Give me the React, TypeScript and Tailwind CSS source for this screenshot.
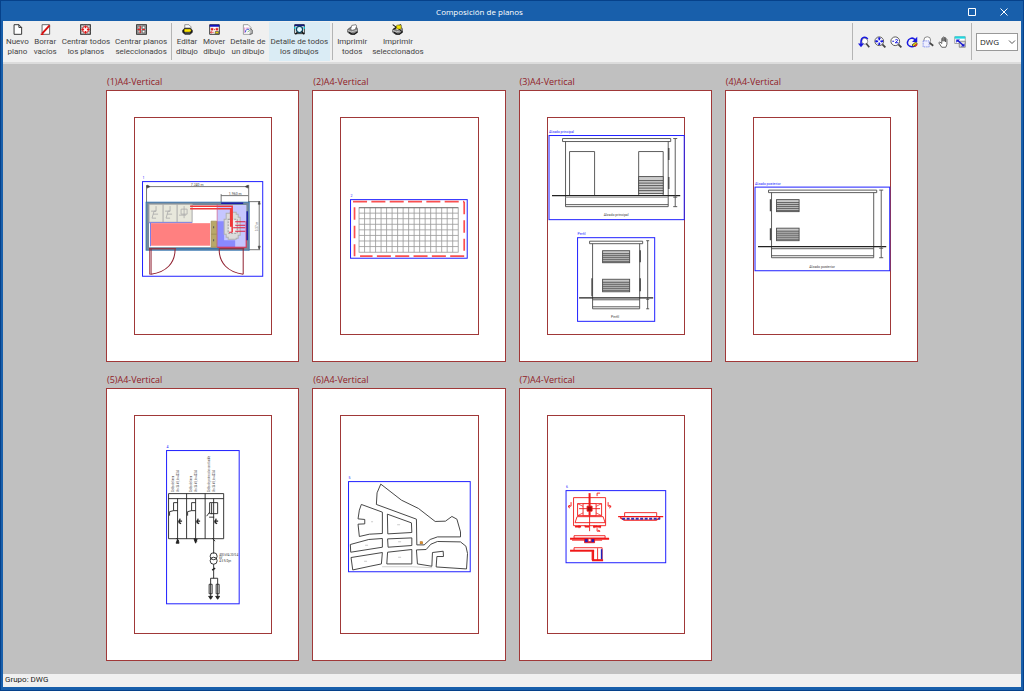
import { ReactNode, useState } from "react";
import clsx from "clsx";

type IconProps = { children: ReactNode; className?: string };

function Icon({ children, className }: IconProps) {
  return (
    <svg
      viewBox="0 0 16 16"
      className={clsx("shrink-0", className ?? "size-[11px]")}
      fill="none"
      stroke="#222"
      aria-hidden="true"
    >
      {children}
    </svg>
  );
}

const Magnifier = () => (
  <>
    <circle cx="7" cy="7" r="5.8" fill="#fff" stroke="#555" strokeWidth="1.3" />
    <path d="M11.2 11.2l4 4" stroke="#444" strokeWidth="2.4" />
  </>
);

const Printer = () => (
  <>
    <path d="M1 8l4-3h9l1.500 3v4l-5 3.500H6L1 12z" fill="#888" stroke="#333" />
    <path d="M1 9l5 2.500 9-2.500" stroke="#ddd" />
    <path d="M5 8l2-6 6-1 1 2-2 5-4 1z" fill="#fff" stroke="#555" />
    <path d="M3 12l4 2.500h4l4-3" stroke="#111" strokeWidth="1.500" />
  </>
);

const icons = {
  newPlan: (
    <Icon>
      <path d="M3 1h7l4 4v10H3z" fill="#fff" strokeWidth="1.300" />
      <path d="M10 1v4h4" strokeWidth="1.300" />
    </Icon>
  ),
  erase: (
    <Icon>
      <path d="M3 1h11v14H3z" fill="#fff" stroke="#555" strokeWidth="1.300" />
      <path d="M3 14L14 2" stroke="#d81010" strokeWidth="2.800" />
      <path d="M1 15h4" stroke="#d81010" strokeWidth="2" />
    </Icon>
  ),
  centerAll: (
    <Icon>
      <path d="M1 1h14v14H1z" fill="#ddd" strokeWidth="1.500" />
      <path d="M5 1v14M11 1v14M1 5h14M1 11h14" stroke="#888" />
      <circle cx="8" cy="8" r="4.500" fill="#fff" stroke="#e01818" strokeWidth="1.300" />
      <path d="M8 2v4M8 10v4M2 8h4M10 8h4" stroke="#e01818" strokeWidth="2" />
    </Icon>
  ),
  centerSelected: (
    <Icon>
      <path d="M1 1h14v14H1z" fill="#ccc" strokeWidth="1.500" />
      <path d="M3 3h4v4H3zM9 3h4v4H9zM3 9h4v4H3zM9 9h4v4H9z" fill="#fff" stroke="#444" />
      <path d="M2 8h5M9 8h4M6 3v4M6 9v4" stroke="#d82020" strokeWidth="1.800" />
    </Icon>
  ),
  edit: (
    <Icon>
      <path d="M4 1h6l3 3v6H4z" fill="#fff" stroke="#666" />
      <path d="M1 9l3-3h8l3 3v3l-3 3H4l-3-3z" fill="#151515" />
      <path d="M4 8h8l1 2-2 1H4z" fill="#ffe800" stroke="#ffe800" />
      <path d="M4 13h8" stroke="#999" />
    </Icon>
  ),
  move: (
    <Icon>
      <path d="M1 1h14v14H1z" fill="#fff" strokeWidth="1.300" />
      <path d="M1 2.500h14" stroke="#1010c0" strokeWidth="3" />
      <path d="M3 6h3v3H3zM10 6h3v3h-3z" fill="#e02020" stroke="#e02020" strokeWidth=".5" />
      <path d="M2 12h5M4 10.500L2 12l2 1.500M8 7v2" stroke="#d81010" />
      <path d="M9 11h5v3H9z" fill="#f0d800" stroke="#444" />
    </Icon>
  ),
  detail: (
    <Icon>
      <path d="M2 1h7l4 4v10H2z" fill="#fff" stroke="#777" />
      <path d="M4 5v8M6 6h4" stroke="#d050b0" />
      <path d="M5 12c0-4 3-5 5-4" stroke="#2040d0" strokeWidth="1.300" />
      <path d="M11 6l4 3v5l-4 1" fill="#bbb" stroke="#444" />
      <path d="M8 12l3-3" stroke="#309030" />
    </Icon>
  ),
  detailAll: (
    <Icon>
      <path d="M1 1h14v13H1z" fill="#fff" strokeWidth="1.300" />
      <path d="M1 2h14" stroke="#101880" strokeWidth="2.500" />
      <path d="M1 4v3M15 4v3" stroke="#00c8d8" strokeWidth="2" />
      <circle cx="8" cy="8" r="4.500" fill="#dff6ff" stroke="#0a4860" strokeWidth="1.800" />
      <path d="M11 11l4 4M5 12l-3 3" stroke="#111" strokeWidth="2" />
    </Icon>
  ),
  print: (
    <Icon>
      <Printer />
    </Icon>
  ),
  printSelected: (
    <Icon>
      <Printer />
      <path d="M1 1l14 10M2 8L13 1" stroke="#111" strokeWidth="1.500" />
      <path d="M7 2h6v5H7z" fill="#f4e400" stroke="#b8a800" />
    </Icon>
  ),
};

type Tool = { id: string; icon: ReactNode; lines: [string, string] };

const toolGroups: Tool[][] = [
  [
    { id: "new", icon: icons.newPlan, lines: ["Nuevo", "plano"] },
    { id: "erase", icon: icons.erase, lines: ["Borrar", "vacíos"] },
    { id: "centerAll", icon: icons.centerAll, lines: ["Centrar todos", "los planos"] },
    { id: "centerSel", icon: icons.centerSelected, lines: ["Centrar planos", "seleccionados"] },
  ],
  [
    { id: "edit", icon: icons.edit, lines: ["Editar", "dibujo"] },
    { id: "move", icon: icons.move, lines: ["Mover", "dibujo"] },
    { id: "detail", icon: icons.detail, lines: ["Detalle de", "un dibujo"] },
    { id: "detailAll", icon: icons.detailAll, lines: ["Detalle de todos", "los dibujos"] },
  ],
  [
    { id: "print", icon: icons.print, lines: ["Imprimir", "todos"] },
    { id: "printSel", icon: icons.printSelected, lines: ["Imprimir", "seleccionados"] },
  ],
];

const viewTools = [
  {
    label: "Vista anterior",
    icon: (
      <>
        <circle cx="9" cy="7" r="4" fill="#fff" stroke="#777" />
        <path d="M11 10l4 5" stroke="#444" strokeWidth="2.200" />
        <path d="M13 4C10 0 4 1 4 8v4" stroke="#1818e0" strokeWidth="2" />
        <path d="M0 10h8l-4 5z" fill="#1818e0" stroke="none" />
      </>
    ),
  },
  {
    label: "Ver todo",
    icon: (
      <>
        <Magnifier />
        <path d="M7 2v3.500M7 8.500V12M2 7h3.500M8.500 7H12" stroke="#1818e0" strokeWidth="2" />
        <path d="M5 4l2-2 2 2M5 10l2 2 2-2M4 5L2 7l2 2M10 5l2 2-2 2" stroke="#1818e0" />
      </>
    ),
  },
  {
    label: "Zoom doble",
    icon: (
      <>
        <Magnifier />
        <path d="M3 7h2.500M7 5.500c1-1.500 4-1 3 .8L7 9h4" stroke="#1818e0" strokeWidth="1.300" />
      </>
    ),
  },
  {
    label: "Redibujar",
    icon: (
      <>
        <path d="M12 13C7 16 1 13 2 8s7-7 10-3" stroke="#1818e0" strokeWidth="2" />
        <path d="M15 1v7H8z" fill="#1818e0" stroke="none" />
        <path d="M8 12l5-4 2 2-5 4z" fill="#f0d000" stroke="#333" />
        <path d="M12 14l3-3" stroke="#d02020" strokeWidth="2" />
      </>
    ),
  },
  {
    label: "Zoom ventana",
    icon: (
      <>
        <circle cx="7" cy="5.500" r="4.500" fill="#fff" stroke="#666" />
        <path d="M10 9l5 4" stroke="#444" strokeWidth="2.200" />
        <path d="M1.500 6.500h8v8h-8z" fill="#eef" stroke="#6878e8" strokeDasharray="2 1" />
      </>
    ),
  },
  {
    label: "Desplazar",
    icon: (
      <path
        d="M5 15L1 9l1.500-1L5 10V3.500c0-1 1.500-1 1.500 0V7 2c0-1 1.800-1 1.800 0v5-4.500c0-1 1.800-1 1.800 0V8 4.500c0-1 1.800-1 1.800 0V11l-1.500 4z"
        fill="#fff"
        stroke="#555"
        strokeWidth="1.200"
      />
    ),
  },
  {
    label: "Pantalla completa",
    icon: (
      <>
        <path d="M1 1h14v9H1z" fill="#fff" stroke="#888" />
        <path d="M1 2h14" stroke="#20d8e0" strokeWidth="3" />
        <path d="M7 7h8v8H7z" fill="#ddd" stroke="#777" />
        <path d="M5 6l8 7" stroke="#1818d0" strokeWidth="2" />
        <path d="M3 4.500h5L3 9zM14 14H9l5-4z" fill="#1818d0" stroke="none" />
      </>
    ),
  },
];

type FrameProps = { x: number; y: number; w: number; h: number; label: string };

// Selection frame of a drawing with its name over the top left corner
const Frame = ({ x, y, w, h, label }: FrameProps) => (
  <>
    <rect x={x} y={y} width={w} height={h} stroke="#2020ff" />
    <text x={x} y={y - 2.500} fontSize="3.5" fill="#2020ff" stroke="none">
      {label}
    </text>
  </>
);

type LouverProps = { x: number; y: number; w: number; h: number };

const Louver = ({ x, y, w, h }: LouverProps) => (
  <>
    <rect x={x} y={y} width={w} height={h} fill="#c8c8c8" />
    {[3, 5, 7, 9, 11].map((d) => (
      <path key={d} d={`M${x} ${y + d}h${w}`} strokeWidth=".9" />
    ))}
  </>
);

const Caption = ({ x, y, text }: { x: number; y: number; text: string }) => (
  <text x={x} y={y} fontSize="3.5" textAnchor="middle" fill="#444" stroke="none">
    {text}
  </text>
);

const FloorPlan = () => (
  <>
    <Frame x={142.5} y={181.5} w={120} h={94.5} label="1" />
    <g stroke="#555" strokeWidth=".8">
      <path d="M146.500 185v18M248.500 185v18M221 194v9M146 186.500h102M221 195.500h27M248 201.500h12M248 249.500h12M259 201v48" />
      <path d="M147 185l3 1.500-3 1.500zM248 185l-3 1.500 3 1.500zM258 204l1-3 1 3zM258 246l1 3 1-3z" fill="#333" />
    </g>
    <Caption x={197} y={186} text="7.240 m" />
    <Caption x={235} y={195} text="1.960 m" />
    <rect x="147.5" y="203.5" width="100" height="45" fill="#fff" stroke="#73889a" strokeWidth="3" />
    <rect x="146" y="202" width="103" height="48" stroke="#2a70b0" strokeWidth=".8" />
    <path d="M176 248.500h43" stroke="#2a70b0" />
    <rect x="217" y="205" width="29" height="42" fill="#c6c6ff" stroke="none" />
    <path d="M217 221h7v19h11v7h-18z" fill="#8a8aff" stroke="none" />
    <g fill="#e8e8dc" stroke="#aaa">
      <path d="M149 204h14v18h-14zM163 204h14v18h-14zM177 204h15v18h-15z" />
      <path
        d="M156 206v5h-5M156 211h-2l-2 7h4M153 214h5M170 206v5h-5M170 211h-2l-2 7h4M167 214h5M184 206v12M181 209h6v5h-6zM179 215h7"
        strokeWidth=".8"
      />
    </g>
    <path d="M149 222.500h43M150.500 222v24" stroke="#7878e8" />
    <rect x="151" y="223" width="59" height="22.5" fill="#ff8080" stroke="none" />
    <path d="M211 221h5.500v26H211zM211 234h5.500" fill="#b8a868" stroke="#9a8a50" strokeWidth=".7" />
    <path d="M213.500 226v2M213.500 239v2" stroke="#555" />
    <path
      d="M226 213h4v-1h6v2h2v3h2v18h-2v3h-2v1h-8v-2h-2v-3h-2v-15h2z"
      fill="#dcdcdc"
      stroke="#b0b0b0"
    />
    <path d="M228 219h9v14h-9z" fill="#eee" stroke="#999" strokeDasharray="2 1" />
    <path d="M190 206h42v26M190 208.500h40.500v18" stroke="#f03838" strokeWidth="1.500" />
    <path d="M235 221.500h10M235 225h10M233 227.500h12M235 231h10M229 232h3M217 247h29v-26" stroke="#e02040" />
    <path d="M217 204v43" stroke="#d04870" strokeWidth=".6" />
    <path d="M221 203h22M247 211v29" stroke="#1c1ca8" strokeWidth="1.500" />
    <g stroke="#902030">
      <path d="M149 248.500h27M151 249v25M219 248.500h25M243 249v25" />
      <path d="M149.500 248v26h1.500" strokeWidth=".7" />
      <path d="M175 249c0 14-9 23-24 25M219 249c0 14 9 23 24 25" />
    </g>
    <text transform="translate(258 231) rotate(-90)" fontSize="3" fill="#555" stroke="none">
      3.37 m
    </text>
  </>
);

const GroundGrid = () => (
  <>
    <Frame x={350.5} y={199.5} w={116.5} h={58.5} label="2" />
    <g stroke="#fa5050" strokeWidth="1.7">
      <path d="M353 201.500h111" strokeDasharray="14 4.300" />
      <path d="M464 256h-104" strokeDasharray="14 4.300" />
      <path d="M354.500 207v49M464 201.500v49" strokeDasharray="12.500 6" />
    </g>
    <g stroke="#989898" strokeWidth=".8">
      <rect x="359" y="207.5" width="99" height="44.500" />
      {Array.from({ length: 17 }, (_, i) => (
        <path key={i} d={`M${364.5 + i * 5.5} 207v45`} />
      ))}
      {Array.from({ length: 7 }, (_, i) => (
        <path key={i} d={`M359 ${213 + i * 5.56}h99`} />
      ))}
    </g>
    <path d="M359 207.500h99" stroke="#777" />
  </>
);

const FrontAndSide = () => (
  <>
    <Frame x={548} y={135.5} w={135} h={84} label="Alzado principal" />
    <g stroke="#4c4c4c" strokeWidth=".9">
      <path d="M561.500 138.500h108v3h-108zM564.500 141.500v65h102.500v-65M564.500 204.500h102.500" />
      <path d="M568.500 195v-43.500h25v43.500M637.500 195v-43.500h24.500v43.500" />
      <rect x="637.5" y="176.5" width="24.500" height="17" fill="#ccc" />
      <path d="M637.500 180.500h24.500M637.500 183h24.500M637.500 185.500h24.500M637.500 188h24.500M637.500 190.500h24.500" />
      <path d="M667.500 148v12M667.500 177v12" strokeWidth="1.500" />
      <path d="M564.500 197.200h102.500" stroke="#999" />
      <path d="M551 195.500h128" stroke="#222" strokeWidth="1.300" />
      <path d="M674 138.500v68M672 138.500h4M672 197h4M672 206.500h4" />
    </g>
    <Caption x={615} y={216} text="Alzado principal" />
    <Frame x={576.5} y={237.5} w={77} h={83.5} label="Perfil" />
    <g stroke="#4c4c4c" strokeWidth=".9">
      <path d="M588.500 241h53v2.500h-53zM591.500 243.500v65h47v-65M591.500 306.500h47M591.500 299.500h47" />
      <Louver x={601.5} y={250.5} w={27} h={12} />
      <Louver x={601.5} y={279} w={27} h={12.5} />
      <path d="M591 278v18M639 250v12M639 278v13" strokeWidth="1.500" />
      <path d="M578 297.500h74" stroke="#222" strokeWidth="1.300" />
      <path d="M646.500 240.500v68M645 240.500h3M645 299h3M645 308.500h3" />
    </g>
    <Caption x={614} y={318} text="Perfil" />
  </>
);

const RearElevation = () => (
  <>
    <Frame x={754} y={187} w={134.5} h={83.5} label="Alzado posterior" />
    <g stroke="#4c4c4c" strokeWidth=".9">
      <path d="M767.500 190h108v2.500h-108zM770.500 192.500v65h102v-65M770.500 255.500h102M770.500 248.500h102" />
      <Louver x={775.5} y={199.5} w={22.5} h={12} />
      <Louver x={775.5} y={228} w={22.5} h={12.5} />
      <path d="M769.500 199v12M769.500 228v12" strokeWidth="1.500" />
      <path d="M757 246.500h128" stroke="#222" strokeWidth="1.300" />
      <path d="M880 190v67.500M878 190h4M878 248h4M878 257.500h4" />
    </g>
    <Caption x={821} y={268} text="Alzado posterior" />
  </>
);

const cellNotes = [
  { x: 174, y: 492, text: "Celda de línea" },
  { x: 179, y: 492, text: "Vn=24 kV, In=400 A" },
  { x: 192, y: 492, text: "Celda de línea" },
  { x: 197, y: 492, text: "Vn=24 kV, In=400 A" },
  { x: 210, y: 492, text: "Celda de protección con fusible" },
  { x: 215, y: 492, text: "Vn=24 kV, In=400 A" },
];

const SingleLine = () => (
  <>
    <Frame x={166.5} y={450.5} w={72.5} h={153} label="4" />
    {cellNotes.map((note) => (
      <text
        key={note.x}
        transform={`translate(${note.x} ${note.y}) rotate(-90)`}
        fontSize="2.6"
        fill="#333"
        stroke="none"
      >
        {note.text}
      </text>
    ))}
    <g stroke="#222" strokeWidth=".9">
      <path d="M168.500 493.500h55v45h-55zM168.500 498.500h55M186.500 493.500v45M205 493.500v45" />
      <path d="M177.500 498.500v44M195.500 498.500v44M213.500 498.500v55" />
      <path d="M177.500 502.500h-4v8h4M195.500 502.500h-4v8h4M217.500 502.500h-8v11h8z" />
      <path d="M173.500 510.500l-4 1v4M191.500 510.500l-4 1v4M209.500 512l-3 4M211.500 503v11M209 517h5" />
      <path d="M178 521h4M180 518.500l-1 4 2 1M196 521h4M198 518.500l-1 4 2 1M214 521h4M216 518.500l-1 4 2 1" strokeWidth="1.300" />
      <path d="M176 538l3 3M194 538l3 3M212 538l3 3M176 543l1.500-4 1.500 4zM194 539l1.500 4 1.500-4z" fill="#222" />
      <circle cx="213.500" cy="556" r="3.500" />
      <circle cx="213.500" cy="560.500" r="3.500" />
      <path d="M213.500 564v14M210.500 584v-6h7v6M209 584h3v9.500h-3zM216 584h3v9.500h-3zM210.500 584v14M217.500 584v14" />
      <path d="M212 570l3-2" strokeWidth="1.500" />
      <path d="M208.500 596h4l-2 3zM215.500 596h4l-2 3z" fill="#222" />
    </g>
    <text fontSize="2.8" fill="#333" stroke="none">
      <tspan x="219" y="556">400 kVA 20/0.4</tspan>
      <tspan x="219" y="559">kV</tspan>
      <tspan x="219" y="562">4.5 % Dyn</tspan>
    </text>
  </>
);

const blocks = [
  "380.700,484 401.300,500 418.300,508.300 435,521.300 445.300,521 451.700,516.300 456.700,519 460.300,531.700 460.300,536.700 437.300,536.700 430,539.300 424,544.700 416.700,544.700 416.300,519 376.300,504.300 377,492.700",
  "361.300,504.300 382.300,512 382.300,533.300 369.300,534 359.300,536.300 358,524 364.700,523.700 364.700,519.300 358,518.700 359.300,510",
  "387.300,514 411.300,522.700 411.700,532.300 387.700,533.700",
  "387.500,538.700 411.700,537.700 411.700,545.300 388,547",
  "387.500,552 411.700,549.300 411.700,563.700 386.700,563.700",
  "350.300,544.300 368.700,539.300 382.300,538.300 382.300,547 350.700,552",
  "351,557.300 382.300,552.300 381.300,563.700 370,566 352.700,569.700",
  "437.300,541.300 460.300,541.700 465.700,546 467.300,553.300 466.300,568.700 436,566.700 436.700,556.300 443.300,556.300 443,551 432.300,552.300 431.700,566 417.300,563.700 416.300,549.700 426,549.300 430.700,544",
];

const SitePlan = () => (
  <>
    <Frame x={348.5} y={481.5} w={121.5} h={90} label="5" />
    <g stroke="#333" strokeWidth=".9">
      {blocks.map((points) => (
        <polygon key={points} points={points} />
      ))}
    </g>
    <path d="M382 566.500h30l20 1" stroke="#bbb" strokeWidth=".7" />
    <path d="M371 521.500h2M397 524.500h3M398 541.500h3M365 545h3M398 557h3M364 561h3" stroke="#ccc" />
    <rect x="420" y="541.5" width="2.500" height="2" fill="#e89020" stroke="#b07020" strokeWidth=".6" />
  </>
);

const Earthing = () => (
  <>
    <Frame x={565} y={490.5} w={99.5} h={72} label="6" />
    <g stroke="#f01818" strokeWidth=".9">
      <path d="M572.500 497.500h32v28h-32zM576.500 503.500h24v12h-24zM576 516.500h26l2 6h-30z" />
      <path d="M576.500 503.500l24 12M600.500 503.500l-24 12" strokeWidth=".7" />
      <path d="M582 503.500h13v12h-13z" fill="#fff" />
      <path d="M578 508.500h21" />
      <path d="M588.500 493v22" strokeWidth="2" />
      <path d="M588.500 515v16" />
      <path d="M586 506h5v5h-5z" fill="#a01010" />
      <path d="M570 502v4h-3M569 505l-2 1.500 2 1.500M607 502v4h3M608 505l2 1.500-2 1.500M596 496v-3h3M597 530l2 1h-3v-3M578 525v3M584 525v2M593 525v3M595 525v2M599 525v3" />
      <path d="M574 526.500h6M584 526.500h4M592 526.500h8" strokeWidth="1.500" />
      <path d="M573 535.500h31v2.500h-31z" />
      <path d="M569 538.500h39" strokeWidth="2" />
      <path d="M571 540h30" />
      <path d="M583.500 538.500h10v4h-10z" fill="#2020b8" />
      <path d="M587 538.500h3v3h-3z" fill="#fff" />
      <path d="M573 547.500h28v12.500h-10v-9M573 547.500v3" />
      <path d="M569 550.500h24" strokeWidth="2" />
      <path d="M592 550v10h10" strokeWidth="2" />
      <path d="M600.500 549v10" stroke="#2020b8" strokeWidth="1.500" />
      <path d="M596.500 548v12" />
      <path d="M623.500 516v-3.500h32v3.500" strokeWidth=".9" />
      <path d="M617 516.500h45M619 517.500l4 2.500h32l4-2.500" strokeWidth="1.300" />
      <path d="M621 518.500h38" stroke="#3030b0" strokeWidth="2" strokeDasharray="3 1.500" />
    </g>
  </>
);

const sheets = [
  { id: 1, viewBox: "135 118 136 216", drawing: <FloorPlan /> },
  { id: 2, viewBox: "341 118 136 216", drawing: <GroundGrid /> },
  { id: 3, viewBox: "547 118 136 216", drawing: <FrontAndSide /> },
  { id: 4, viewBox: "753 118 136 216", drawing: <RearElevation /> },
  { id: 5, viewBox: "135 416 136 216", drawing: <SingleLine /> },
  { id: 6, viewBox: "341 416 136 216", drawing: <SitePlan /> },
  { id: 7, viewBox: "547 416 136 216", drawing: <Earthing /> },
];

const Separator = () => <div className="my-px w-px self-stretch bg-[#b4b4b4]" />;

export default function App() {
  const [mode, setMode] = useState("detailAll");

  return (
    <div className="flex min-h-screen flex-col border border-[#06418a] bg-[#185fab] px-[2px] pb-[3px] font-[Roboto,sans-serif] text-[8px] leading-[10px] text-[#444]">
      <header className="flex h-5 items-center pt-[2px] pr-px font-['Open_Sans',sans-serif] text-white">
        <h1 className="grow text-center">Composición de planos</h1>
        <button type="button" aria-label="Maximizar" className="flex w-8 justify-center">
          <svg viewBox="0 0 8 8" className="size-2" fill="none" stroke="#fff">
            <path d="M.5.5h7v7h-7z" />
          </svg>
        </button>
        <button type="button" aria-label="Cerrar" className="flex w-8 justify-center">
          <svg viewBox="0 0 8 8" className="size-2" stroke="#fff">
            <path d="M.5.5l7 7M7.500.500l-7 7" />
          </svg>
        </button>
      </header>

      <div className="flex items-stretch border-b-2 border-[#dcdcdc] bg-[#f0f0f0] py-px pl-px">
        {toolGroups.map((group, i) => (
          <div key={i} className="flex">
            {i > 0 && (
              <div className="flex px-[2px]">
                <Separator />
              </div>
            )}
            <div className="flex gap-px">
              {group.map((tool) => (
                <button
                  key={tool.id}
                  type="button"
                  onClick={() => setMode(tool.id)}
                  className={clsx(
                    "flex h-[39px] flex-col items-center gap-[2px] px-[2px] pt-[2px] whitespace-nowrap",
                    mode === tool.id && "bg-[#daecf5]"
                  )}
                >
                  {tool.icon}
                  <span>
                    {tool.lines[0]}
                    <br />
                    {tool.lines[1]}
                  </span>
                </button>
              ))}
            </div>
          </div>
        ))}
        <div className="ml-auto flex items-center">
          <Separator />
          <div className="flex gap-1 px-[5px]">
            {viewTools.map((tool) => (
              <button key={tool.label} type="button" aria-label={tool.label}>
                <Icon className="size-3">{tool.icon}</Icon>
              </button>
            ))}
          </div>
          <Separator />
          <div className="relative mr-[3px] ml-1">
            <select
              aria-label="Formato"
              className="block h-[18px] w-[42px] appearance-none border border-[#999] bg-white pl-[3px] font-['Open_Sans',sans-serif] text-[8px] text-[#222]"
            >
              <option>DWG</option>
              <option>DXF</option>
              <option>PDF</option>
            </select>
            <svg
              viewBox="0 0 8 8"
              className="pointer-events-none absolute top-[5px] right-[2px] size-2"
              fill="none"
              stroke="#555"
            >
              <path d="M1 2.500l3 3 3-3" />
            </svg>
          </div>
        </div>
      </div>

      <main className="grow bg-[#c0c0c0] pt-3 pb-3">
        <div className="mx-auto grid max-w-[812px] grid-cols-4 gap-x-[13px] gap-y-3">
          {sheets.map((sheet) => (
            <section key={sheet.id}>
              <h2 className="mb-[2px] pl-px font-['Open_Sans',sans-serif] text-[9px] leading-3 text-[#902028]">
                ({sheet.id})A4-Vertical
              </h2>
              <div className="aspect-[193/272] border border-[#a03838] bg-white p-[26px] pl-[27px]">
                <div className="h-full border border-[#a03838]">
                  <svg
                    viewBox={sheet.viewBox}
                    className="size-full overflow-visible"
                    fill="none"
                    role="img"
                    aria-label={`Plano ${sheet.id}`}
                  >
                    {sheet.drawing}
                  </svg>
                </div>
              </div>
            </section>
          ))}
        </div>
      </main>

      <footer className="h-[13px] bg-[#f0f0f0] pl-[2px] leading-3 text-[#222]">Grupo: DWG</footer>
    </div>
  );
}
